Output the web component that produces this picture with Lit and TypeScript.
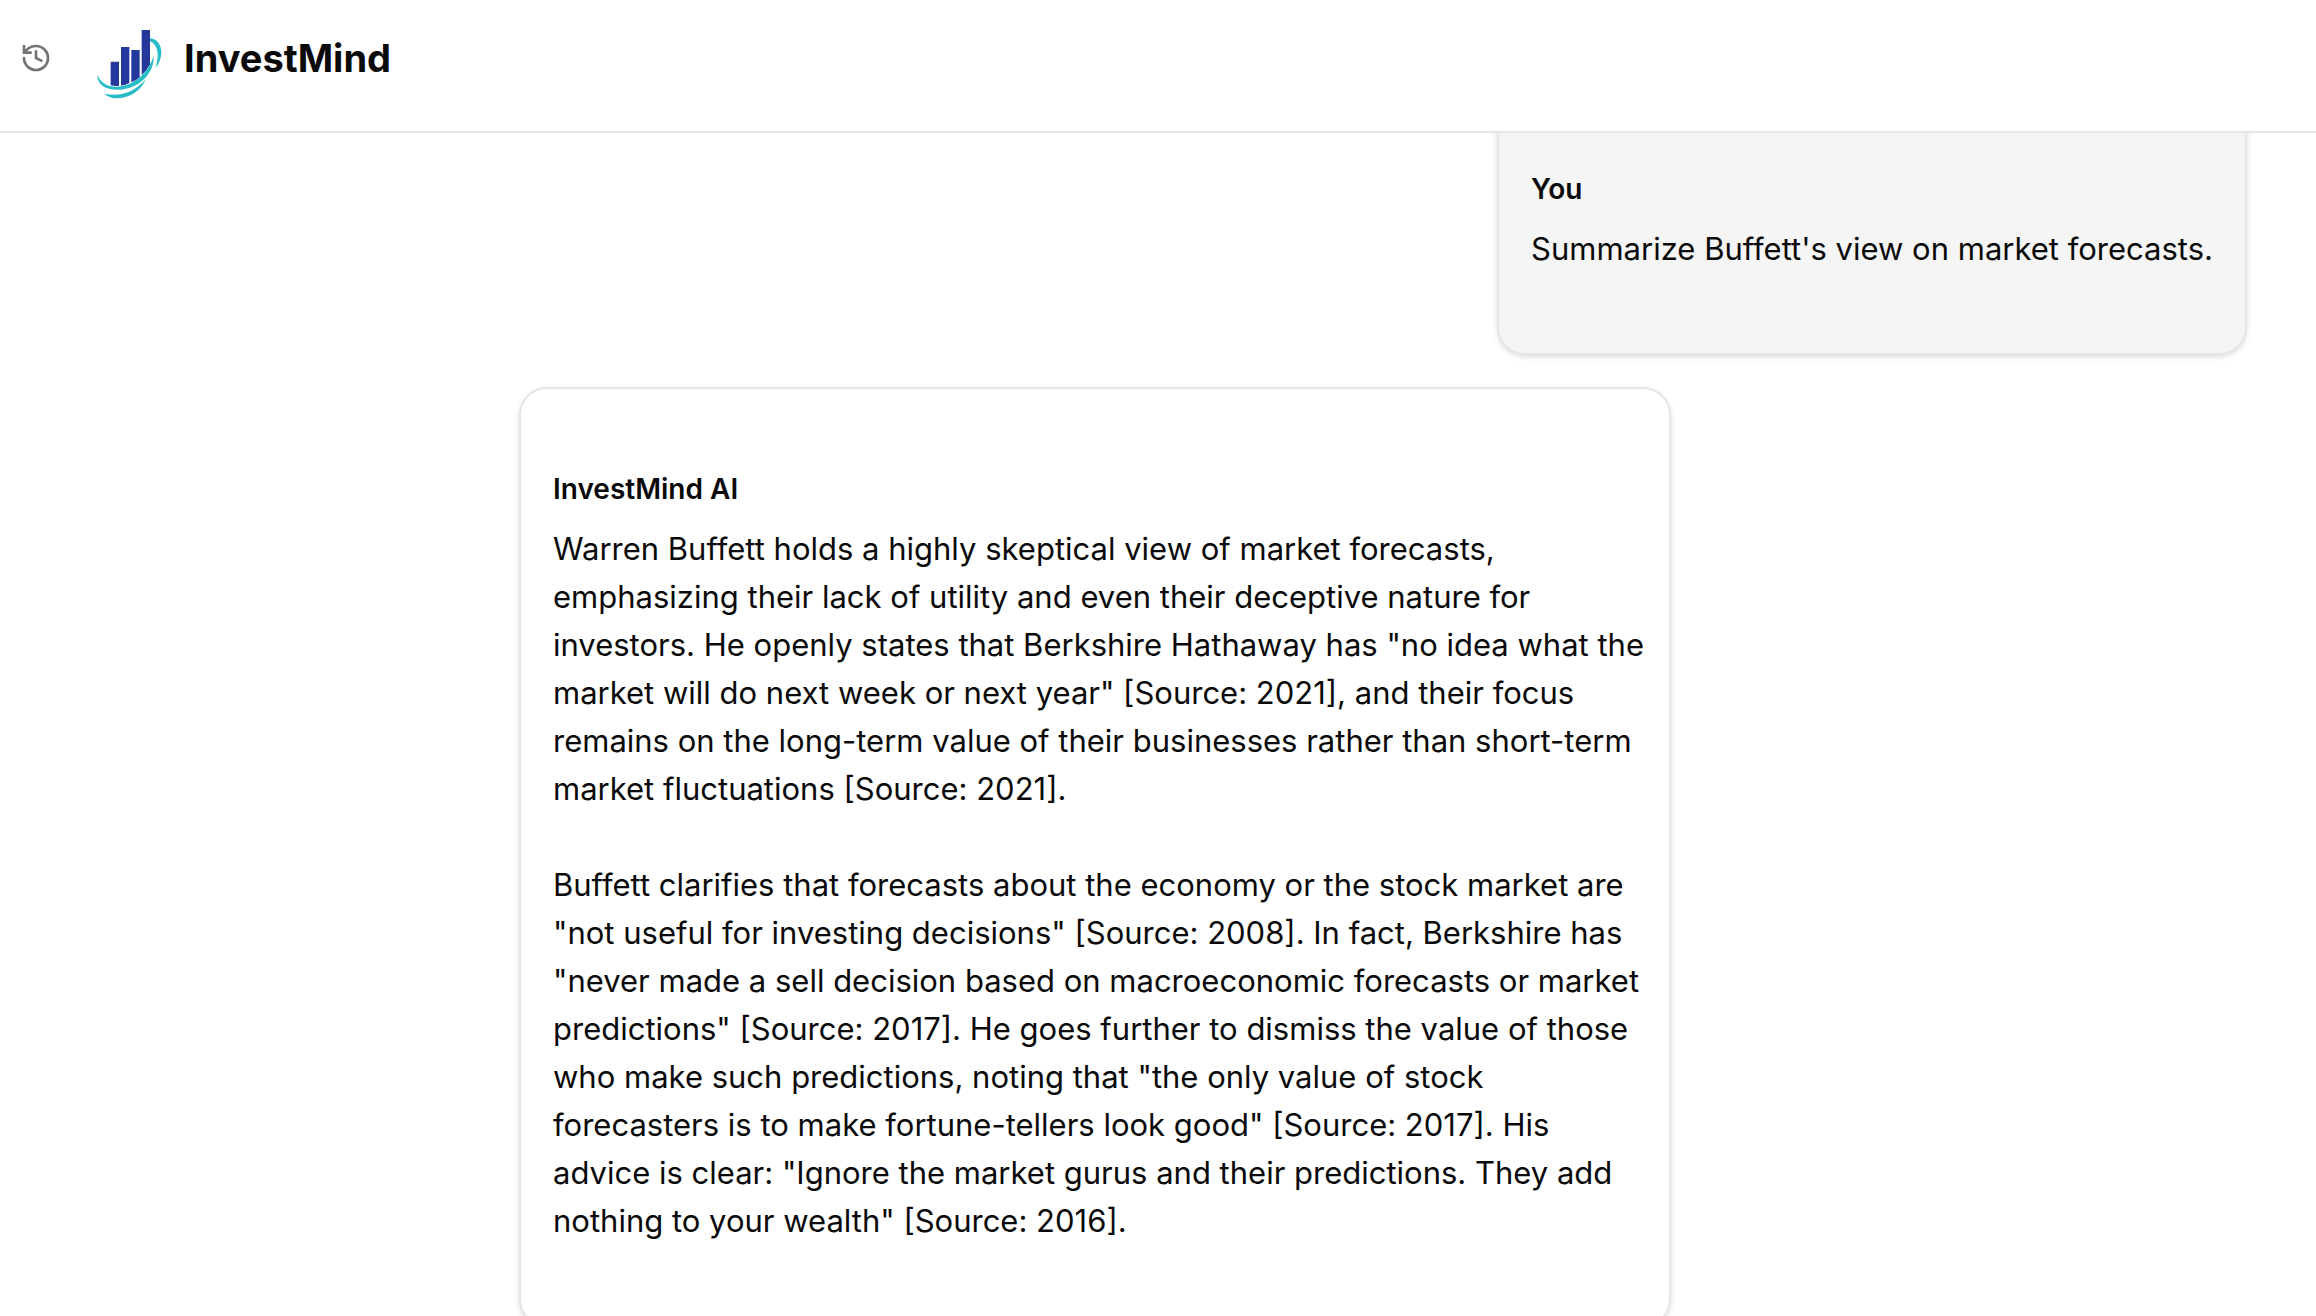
import { LitElement, html, css } from "lit";
import { customElement, property } from "lit/decorators.js";

interface Message {
  author: string;
  role: "user" | "assistant";
  paragraphs: string[];
}

const MESSAGES: Message[] = [
  {
    author: "You",
    role: "user",
    paragraphs: ["Summarize Buffett's view on market forecasts."],
  },
  {
    author: "InvestMind AI",
    role: "assistant",
    paragraphs: [
      'Warren Buffett holds a highly skeptical view of market forecasts, emphasizing their lack of utility and even their deceptive nature for investors. He openly states that Berkshire Hathaway has "no idea what the market will do next week or next year" [Source: 2021], and their focus remains on the long-term value of their businesses rather than short-term market fluctuations [Source: 2021].',
      'Buffett clarifies that forecasts about the economy or the stock market are "not useful for investing decisions" [Source: 2008]. In fact, Berkshire has "never made a sell decision based on macroeconomic forecasts or market predictions" [Source: 2017]. He goes further to dismiss the value of those who make such predictions, noting that "the only value of stock forecasters is to make fortune-tellers look good" [Source: 2017]. His advice is clear: "Ignore the market gurus and their predictions. They add nothing to your wealth" [Source: 2016].',
    ],
  },
];

@customElement("app-header")
export class AppHeader extends LitElement {
  static styles = css`
    :host {
      display: block;
      position: relative;
      z-index: 1;
      flex: none;
      background: #fff;
      border-bottom: 2px solid #e5e5e5;
    }
    .bar {
      display: flex;
      align-items: center;
      padding: 20px 20px 31px;
    }
    .history {
      display: flex;
      padding: 0;
      margin: 0 36px 4px 0;
      border: 0;
      background: none;
      color: #737373;
      cursor: pointer;
    }
    .history-icon {
      width: 32px;
      height: 32px;
    }
    .logo {
      width: 80px;
      height: 80px;
    }
    .name {
      margin: 0 0 4px 16px;
      font-size: 38px;
      line-height: 56px;
      font-weight: 700;
    }
  `;

  render() {
    return html`
      <div class="bar">
        <button class="history" type="button" aria-label="Chat history">
          <svg class="history-icon" viewBox="0 0 24 24" fill="none" stroke="currentColor" stroke-width="2" stroke-linecap="round" stroke-linejoin="round" aria-hidden="true">
            <path d="M3 12a9 9 0 1 0 9-9 9.75 9.75 0 0 0-6.74 2.74L3 8" />
            <path d="M3 3v5h5" />
            <path d="M12 7v5l4 2" />
          </svg>
        </button>
        <svg class="logo" viewBox="9 15 240 240" aria-hidden="true">
          <g fill="#24389c">
            <path d="M77 140h25v73q-13 1-25-2z" />
            <path d="M108 96h25v108q-11 6-25 8z" />
            <path d="M139 105h25v82q-10 10-25 15z" />
            <path d="M170 45h25v103q-9 18-25 33z" />
          </g>
          <g fill="#27bcc6">
            <path d="M37 179C46 203 68 217 99 215C145 212 188 178 206 123C209 176 160 223 101 224C62 225 36 209 37 179Z" />
            <path d="M195 70C218 72 230 92 229 115C228 133 221 148 211 160C220 134 221 107 211 93C206 85 201 81 195 79Z" />
            <path d="M59 236C104 246 148 233 182 193C168 230 130 251 92 250C79 249 67 245 59 236Z" />
          </g>
        </svg>
        <h1 class="name">InvestMind</h1>
      </div>
    `;
  }
}

@customElement("chat-message")
export class ChatMessage extends LitElement {
  @property({ attribute: false }) message!: Message;

  static styles = css`
    :host {
      display: flex;
    }
    .card {
      box-sizing: border-box;
      padding: 80px 32px;
      border: 2px solid #e5e5e5;
      border-radius: 28px;
      background: #fff;
      box-shadow: 0 2px 6px rgb(0 0 0 / 10%), 0 2px 4px -2px rgb(0 0 0 / 10%);
    }
    .assistant {
      max-width: 1152px;
      padding-right: 24px;
    }
    .user {
      margin-left: auto;
      background: #f5f5f5;
    }
    .author {
      margin: 0 0 16px;
      font-size: 28px;
      line-height: 40px;
      font-weight: 600;
    }
    .text {
      margin: 0;
      font-size: 31px;
      line-height: 48px;
    }
    .text + .text {
      margin-top: 48px;
    }
  `;

  render() {
    const { author, role, paragraphs } = this.message;
    return html`
      <article class="card ${role}">
        <h2 class="author">${author}</h2>
        ${paragraphs.map((p) => html`<p class="text">${p}</p>`)}
      </article>
    `;
  }
}

@customElement("app-root")
export class AppRoot extends LitElement {
  static styles = css`
    :host {
      display: flex;
      flex-direction: column;
      height: 100vh;
      overflow: hidden;
      background: #fff;
      color: #0a0a0a;
      font-family: Inter, "Liberation Sans", sans-serif;
    }
    .chat {
      flex: 1;
      min-height: 0;
      padding-left: 450px;
    }
    .thread {
      display: flex;
      flex-direction: column;
      gap: 32px;
      max-width: 1728px;
      /* The thread is scrolled so its first message sits partly under the header. */
      margin: -46px auto 0;
    }
  `;

  render() {
    return html`
      <app-header></app-header>
      <main class="chat">
        <div class="thread">
          ${MESSAGES.map((m) => html`<chat-message .message=${m}></chat-message>`)}
        </div>
      </main>
    `;
  }
}
